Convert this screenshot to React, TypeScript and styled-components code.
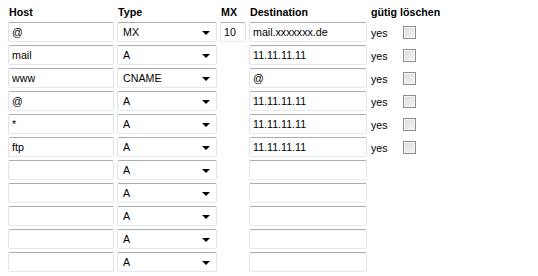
import React from "react";
import styled, { createGlobalStyle } from "styled-components";

const Global = createGlobalStyle`
  html, body { margin: 0; padding: 0; background: #fff; }
  body { font-family: Arial, "Liberation Sans", sans-serif; font-size: 8pt; color: #000; }
`;

const Table = styled.div`
  display: grid;
  grid-template-columns: 106px 100px 26px 118px 30px 13px;
  grid-template-rows: 16px;
  column-gap: 3px;
  row-gap: 3px;
  grid-auto-rows: 20px;
  padding: 3px 8px 0 8px;
  align-items: center;
`;

const Head = styled.div<{ $span?: number }>`
  font-weight: bold;
  font-size: 8pt;
  line-height: 14px;
  padding-left: 1px;
  white-space: nowrap;
  align-self: end;
  grid-column: span ${(p) => p.$span ?? 1};
`;

const Field = styled.div`
  box-sizing: border-box;
  height: 20px;
  border: 1px solid #e2e3ea;
  border-top-color: #abadb3;
  border-bottom-color: #e3e9ef;
  border-radius: 2px;
  background: #fff;
  display: flex;
  align-items: center;
  padding: 0 3px;
  font-size: 8pt;
  white-space: nowrap;
  overflow: hidden;
`;

const Select = styled(Field)`
  justify-content: space-between;
  padding: 0 6px 0 5px;
`;

const Arrow = styled.span`
  width: 0;
  height: 0;
  border-left: 4px solid transparent;
  border-right: 4px solid transparent;
  border-top: 4px solid #000;
  margin-top: 2px;
`;

const Yes = styled.div`
  font-size: 8pt;
  padding-left: 1px;
  padding-top: 2px;
`;

const Check = styled.div`
  box-sizing: border-box;
  width: 13px;
  height: 13px;
  border: 1px solid #8e8f8f;
  background: linear-gradient(135deg, #dcdcdc 0%, #f4f4f4 100%);
  box-shadow: inset 0 0 0 1px #f4f4f4;
  margin-top: 1px;
`;

const Empty = styled.div``;

type Row = { host: string; type: string; mx?: string; dest: string; yes?: boolean };

const rows: Row[] = [
  { host: "@", type: "MX", mx: "10", dest: "mail.xxxxxxx.de", yes: true },
  { host: "mail", type: "A", dest: "11.11.11.11", yes: true },
  { host: "www", type: "CNAME", dest: "@", yes: true },
  { host: "@", type: "A", dest: "11.11.11.11", yes: true },
  { host: "*", type: "A", dest: "11.11.11.11", yes: true },
  { host: "ftp", type: "A", dest: "11.11.11.11", yes: true },
  { host: "", type: "A", dest: "" },
  { host: "", type: "A", dest: "" },
  { host: "", type: "A", dest: "" },
  { host: "", type: "A", dest: "" },
  { host: "", type: "A", dest: "" },
];

export default function App() {
  return (
    <>
      <Global />
      <Table>
        <Head>Host</Head>
        <Head>Type</Head>
        <Head>MX</Head>
        <Head>Destination</Head>
        <Head $span={2}>gütig löschen</Head>
        {rows.map((r, i) => (
          <React.Fragment key={i}>
            <Field>{r.host}</Field>
            <Select>
              <span>{r.type}</span>
              <Arrow />
            </Select>
            {r.mx !== undefined ? <Field>{r.mx}</Field> : <Empty />}
            <Field>{r.dest}</Field>
            {r.yes ? <Yes>yes</Yes> : <Empty />}
            {r.yes ? <Check /> : <Empty />}
          </React.Fragment>
        ))}
      </Table>
    </>
  );
}
